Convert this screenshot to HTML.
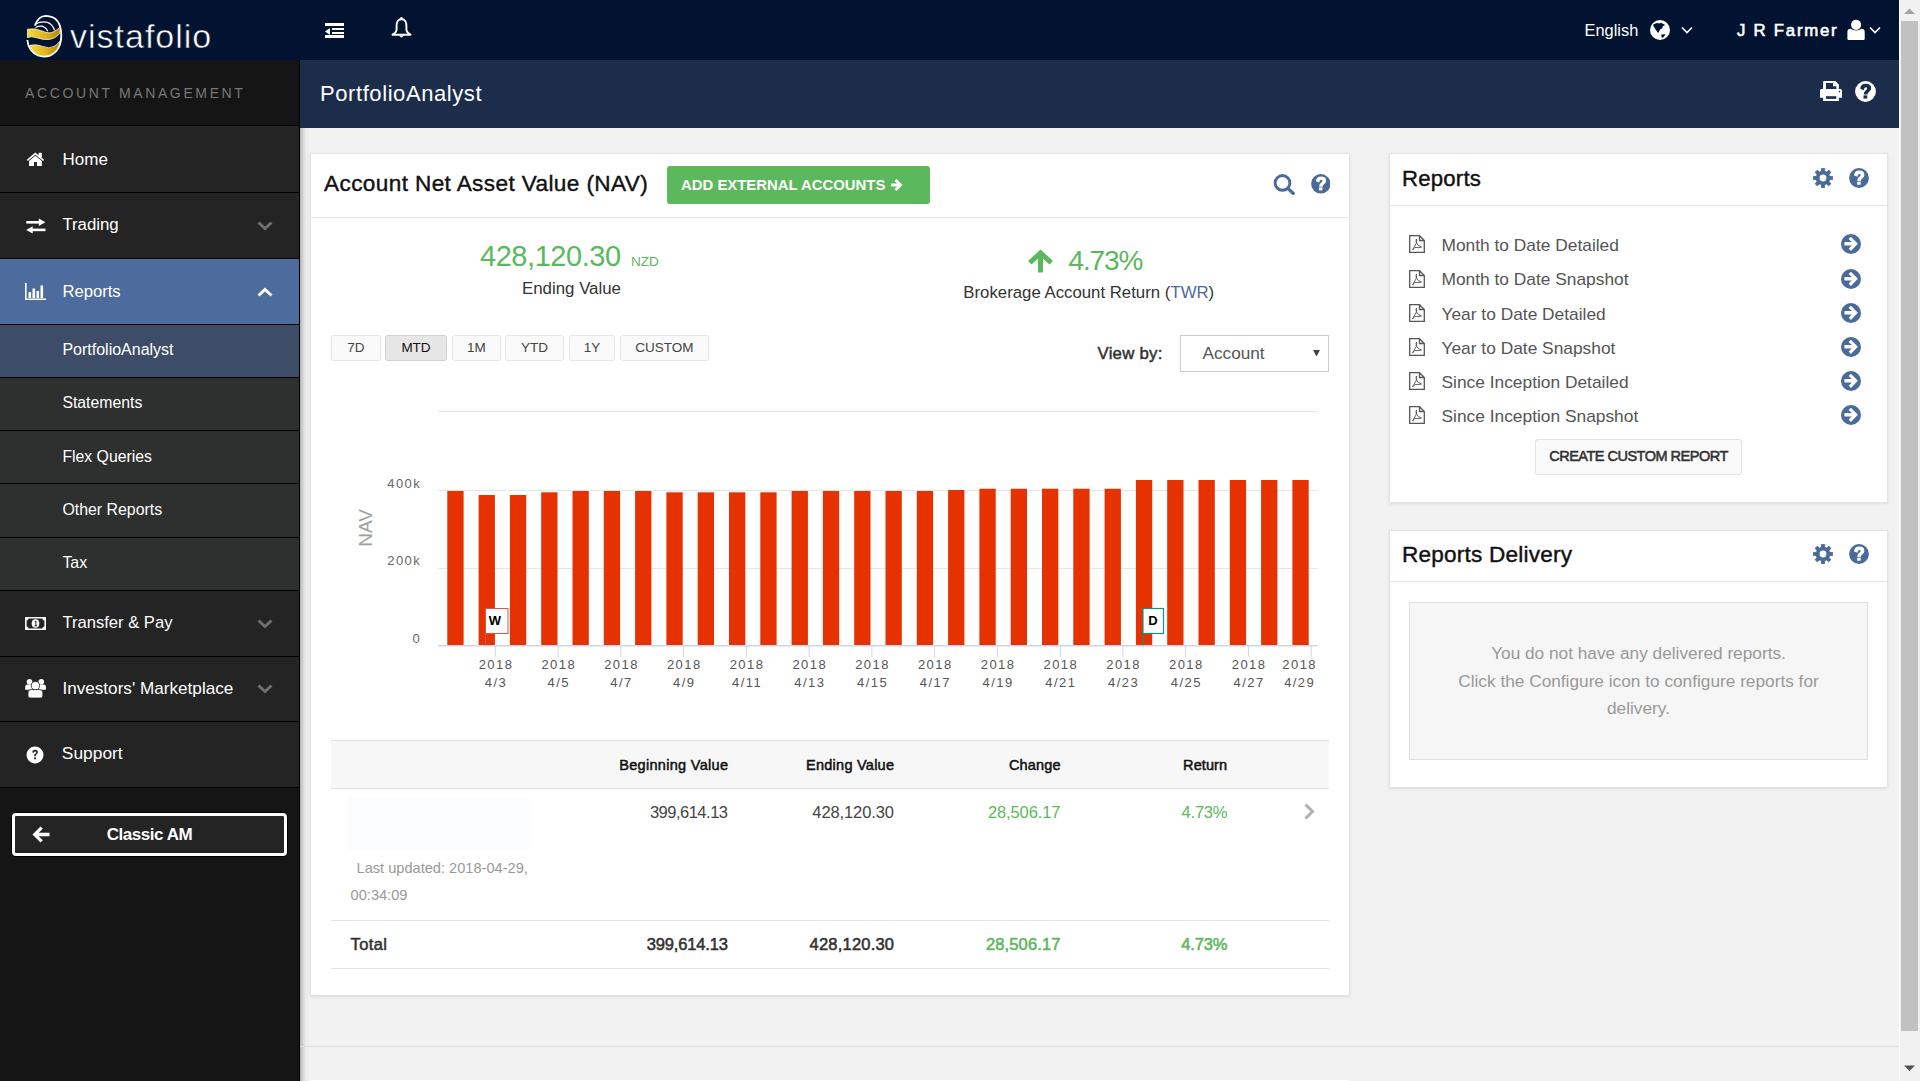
<!DOCTYPE html><html><head><meta charset="utf-8"><style>
html,body{margin:0;padding:0;width:1920px;height:1081px;overflow:hidden;font-family:"Liberation Sans",sans-serif;}
.t{position:absolute;line-height:1;white-space:nowrap;}
.r{position:absolute;display:block;}
</style></head><body>
<div class="r" style="left:0px;top:0px;width:1920px;height:1081px;background:#f2f2f2;"></div>
<div class="r" style="left:0px;top:0px;width:1899px;height:60px;background:#011330;"></div>
<div class="t" style="top:19.22px;font-size:34px;color:#fff;letter-spacing:1.0px;left:70px;-webkit-text-stroke:0.55px #011330;">vistafolio</div>
<svg class="r" style="left:22px;top:10px;" width="46" height="50" viewBox="22 10 46 50">
<defs><linearGradient id="gold" x1="0" x2="1"><stop offset="0" stop-color="#f3dc3a"/><stop offset="0.55" stop-color="#ddb21c"/><stop offset="1" stop-color="#b8820c"/></linearGradient></defs>
<path d="M35 25.8 Q38 16 46 15.9 Q61 16.5 61.3 35 Q61.5 50 50 55.6 Q44 57.5 38 55.5 Q28.5 51.5 27.3 40" fill="none" stroke="#fff" stroke-width="1.8"/>
<path d="M35.5 27.5 Q44 23.5 47.8 31.3" fill="none" stroke="#fff" stroke-width="1.2"/>
<path d="M34.6 24.2 Q50 17.5 54.6 30.3" fill="none" stroke="#fff" stroke-width="1.2"/>
<path d="M27.4 29.2 Q35 27.5 42 31 Q49 34 53 32 Q57.5 30 60.3 26.8 L59.8 33.5 Q55 39 49 39.6 Q43 40 37 37.8 Q31 36 27.4 37.6 Z" fill="url(#gold)" stroke="#fff" stroke-width="0.7"/>
<path d="M29.6 45.3 Q36 43.8 42 46.2 Q49 49 54 46.5 Q58 44 60.2 40.8 Q59 50.5 50.5 55 Q44 57.3 38 55 Q32 51.8 29.6 45.3 Z" fill="url(#gold)" stroke="#fff" stroke-width="0.7"/>
</svg>
<div class="r" style="left:325px;top:23px;width:19px;height:3px;background:#fff;"></div>
<div class="r" style="left:332px;top:28px;width:12px;height:2px;background:#fff;"></div>
<div class="r" style="left:332px;top:32px;width:12px;height:2px;background:#fff;"></div>
<div class="r" style="left:325px;top:35px;width:19px;height:3px;background:#fff;"></div>
<svg class="r" style="left:325px;top:28px;" width="6" height="7" viewBox="0 0 6 7"><path d="M0 3.5 L5 0 L5 7Z" fill="#fff"/></svg>
<svg class="r" style="left:391px;top:16px;" width="21" height="23" viewBox="0 0 21 23"><path d="M10.5 3.3 C6.8 3.3 5.6 6.2 5.6 9.5 L5.6 13.3 C5.6 15.6 4 17.3 1.5 18.7 L19.5 18.7 C17 17.3 15.4 15.6 15.4 13.3 L15.4 9.5 C15.4 6.2 14.2 3.3 10.5 3.3 Z" fill="none" stroke="#fff" stroke-width="1.9" stroke-linejoin="round"/><circle cx="10.5" cy="2.3" r="1.3" fill="#fff"/><path d="M8.2 19.8 Q10.5 23.2 12.8 19.8 Z" fill="#fff"/></svg>
<div class="t" style="top:22.12px;font-size:16.4px;color:#fff;left:1584.5px;">English</div>
<svg class="r" style="left:1650px;top:20px;" width="20" height="20" viewBox="0 0 20 20"><circle cx="10" cy="10" r="10" fill="#fff"/><path d="M3.6 4.2 L7 3 L9.5 3.6 L11 2.8 L15.2 5 L12.8 6.2 L12.3 8.2 L10 9.6 L8.8 12.6 L7.6 12.6 L5.6 9.6 L3.2 5.6 Z M11.3 14.6 L15.6 14.3 L13 17.8 L11.6 17.6 Z" fill="#011330"/></svg>
<svg class="r" style="left:1681px;top:26px;" width="12" height="8" viewBox="0 0 12 8"><path d="M1 1.5 L6 6.5 L11 1.5" fill="none" stroke="#fff" stroke-width="1.6"/></svg>
<div class="t" style="top:22.78px;font-size:16.8px;color:#fff;letter-spacing:1.75px;left:1737px;-webkit-text-stroke:0.6px #fff;">J R Farmer</div>
<svg class="r" style="left:1846px;top:19px;" width="20" height="22" viewBox="0 0 20 22"><circle cx="10.1" cy="5.8" r="5.1" fill="#fff"/><path d="M1.4 20 L1.4 13 Q1.4 9.7 4.6 9.7 Q7 11.5 10.1 11.5 Q13.2 11.5 15.5 9.7 Q18.7 9.7 18.7 13 L18.7 20 Q18.7 21.1 17.5 21.1 L2.6 21.1 Q1.4 21.1 1.4 20Z" fill="#fff"/></svg>
<svg class="r" style="left:1869px;top:26px;" width="12" height="8" viewBox="0 0 12 8"><path d="M1 1.5 L6 6.5 L11 1.5" fill="none" stroke="#fff" stroke-width="1.6"/></svg>
<div class="r" style="left:300px;top:60px;width:1599px;height:68px;background:#1c2d4c;"></div>
<div class="t" style="top:82.58px;font-size:22px;color:#fff;letter-spacing:0.58px;left:320px;">PortfolioAnalyst</div>
<div class="r" style="left:1899px;top:0px;width:21px;height:1081px;background:#f1f1f1;"></div>
<div class="r" style="left:1899px;top:0px;width:1px;height:1081px;background:#fff;"></div>
<div class="r" style="left:1901px;top:21px;width:17px;height:1010px;background:#c1c1c1;"></div>
<svg class="r" style="left:1904px;top:8px;" width="11" height="7" viewBox="0 0 11 7"><path d="M0 6 L5.5 0.5 L11 6Z" fill="#a3a3a3"/></svg>
<svg class="r" style="left:1904px;top:1065px;" width="11" height="7" viewBox="0 0 11 7"><path d="M0 0.5 L5.5 6 L11 0.5Z" fill="#505050"/></svg>
<div class="r" style="left:0px;top:60px;width:299px;height:1021px;background:#151515;"></div>
<div class="r" style="left:299px;top:60px;width:1px;height:1021px;background:#000;"></div>
<div class="r" style="left:300px;top:128px;width:10px;height:953px;background:;background:linear-gradient(to right,#b2b2b2 0px,#d6d6d6 3px,#ebebeb 6px,#f2f2f2 10px);"></div>
<div class="t" style="top:86.15px;font-size:14px;color:#777;letter-spacing:2.63px;left:25px;">ACCOUNT MANAGEMENT</div>
<div class="r" style="left:0px;top:125px;width:299px;height:1px;background:#000;"></div>
<div class="r" style="left:0px;top:126px;width:299px;height:66px;background:#242424;"></div>
<div class="r" style="left:0px;top:192px;width:299px;height:1px;background:#000;"></div>
<div class="r" style="left:0px;top:193px;width:299px;height:65px;background:#242424;"></div>
<div class="r" style="left:0px;top:258px;width:299px;height:1px;background:#000;"></div>
<div class="r" style="left:0px;top:259px;width:299px;height:65px;background:#4c6c9e;"></div>
<div class="r" style="left:0px;top:324px;width:299px;height:1px;background:#000;"></div>
<div class="r" style="left:0px;top:325px;width:299px;height:52px;background:#3e4d67;"></div>
<div class="r" style="left:0px;top:377px;width:299px;height:1px;background:#000;"></div>
<div class="r" style="left:0px;top:378px;width:299px;height:52px;background:#2e302f;"></div>
<div class="r" style="left:0px;top:430px;width:299px;height:1px;background:#000;"></div>
<div class="r" style="left:0px;top:431px;width:299px;height:52px;background:#2e302f;"></div>
<div class="r" style="left:0px;top:483px;width:299px;height:1px;background:#000;"></div>
<div class="r" style="left:0px;top:484px;width:299px;height:53px;background:#2e302f;"></div>
<div class="r" style="left:0px;top:537px;width:299px;height:1px;background:#000;"></div>
<div class="r" style="left:0px;top:538px;width:299px;height:52px;background:#2e302f;"></div>
<div class="r" style="left:0px;top:590px;width:299px;height:1px;background:#000;"></div>
<div class="r" style="left:0px;top:591px;width:299px;height:65px;background:#242424;"></div>
<div class="r" style="left:0px;top:656px;width:299px;height:1px;background:#000;"></div>
<div class="r" style="left:0px;top:657px;width:299px;height:64px;background:#242424;"></div>
<div class="r" style="left:0px;top:721px;width:299px;height:1px;background:#000;"></div>
<div class="r" style="left:0px;top:722px;width:299px;height:65px;background:#242424;"></div>
<div class="r" style="left:0px;top:787px;width:299px;height:1px;background:#000;"></div>
<div class="t" style="top:151.11px;font-size:17px;color:#fff;left:62.5px;">Home</div>
<div class="t" style="top:216.68px;font-size:16.8px;color:#fff;left:62.4px;">Trading</div>
<div class="t" style="top:283.51px;font-size:16.65px;color:#fff;left:62.4px;">Reports</div>
<div class="t" style="top:341.66px;font-size:16px;color:#fff;left:62.4px;">PortfolioAnalyst</div>
<div class="t" style="top:395.23px;font-size:15.8px;color:#fff;left:62.4px;">Statements</div>
<div class="t" style="top:448.63px;font-size:15.8px;color:#fff;left:62.4px;">Flex Queries</div>
<div class="t" style="top:501.84px;font-size:15.9px;color:#fff;left:62.4px;">Other Reports</div>
<div class="t" style="top:555.24px;font-size:15.9px;color:#fff;left:62.4px;">Tax</div>
<div class="t" style="top:615.15px;font-size:16.6px;color:#fff;left:62.4px;">Transfer &amp; Pay</div>
<div class="t" style="top:679.98px;font-size:17.15px;color:#fff;left:62.4px;">Investors' Marketplace</div>
<div class="t" style="top:745.27px;font-size:17.4px;color:#fff;left:61.8px;">Support</div>
<svg class="r" style="left:22px;top:148px;" width="28" height="24" viewBox="22 148 28 24"><path d="M27.3 160.3 L35.3 153.7 L43.6 160.3" fill="none" stroke="#fff" stroke-width="1.7"/><rect x="38.6" y="152.8" width="3.2" height="4.6" fill="#fff"/><path d="M29 160.9 L35.3 155.7 L41.9 160.9 L41.9 166 L36.9 166 L36.9 162 L34 162 L34 166 L29 166 Z" fill="#fff"/></svg>
<svg class="r" style="left:26px;top:218px;" width="20" height="16" viewBox="0 0 20 16"><rect x="0.3" y="3" width="14" height="2.6" fill="#fff"/><path d="M12.8 0.6 L19.3 4.3 L12.8 8Z" fill="#fff"/><rect x="5.5" y="10.6" width="14" height="2.6" fill="#fff"/><path d="M6.7 8.2 L0.2 11.9 L6.7 15.6Z" fill="#fff"/></svg>
<svg class="r" style="left:25px;top:283px;" width="21" height="17" viewBox="0 0 21 17"><path d="M0.8 0 L0.8 16.2 L21 16.2" fill="none" stroke="#fff" stroke-width="1.6"/><rect x="3.5" y="9" width="2.6" height="6" fill="#fff"/><rect x="7.5" y="5.5" width="2.6" height="9.5" fill="#fff"/><rect x="11.5" y="8" width="2.6" height="7" fill="#fff"/><rect x="15.5" y="2.5" width="2.6" height="12.5" fill="#fff"/></svg>
<svg class="r" style="left:25px;top:617px;" width="21" height="13" viewBox="0 0 21 13"><rect x="0" y="0" width="21" height="13" fill="#fff"/><path d="M3.6 1.6 L17.4 1.6 Q17.6 3.5 19.4 3.6 L19.4 9.4 Q17.6 9.5 17.4 11.4 L3.6 11.4 Q3.4 9.5 1.6 9.4 L1.6 3.6 Q3.4 3.5 3.6 1.6Z" fill="#242424"/><ellipse cx="10.5" cy="6.5" rx="3.8" ry="4.3" fill="#fff"/><path d="M9.6 4.8 L10.9 4 L10.9 8.8 M9.5 8.8 L12.2 8.8" fill="none" stroke="#242424" stroke-width="1"/></svg>
<svg class="r" style="left:20px;top:674px;" width="32" height="28" viewBox="20 674 32 28"><circle cx="29.5" cy="681.7" r="2.8" fill="#fff"/><circle cx="41.3" cy="681.7" r="2.8" fill="#fff"/><path d="M25.2 689.8 L25.2 686.8 Q25.2 684.6 27.4 684.6 L32 684.6 L32 689.8 Z" fill="#fff"/><path d="M45.9 689.8 L45.9 686.8 Q45.9 684.6 43.7 684.6 L39 684.6 L39 689.8 Z" fill="#fff"/><circle cx="35.45" cy="685.7" r="4.1" fill="#fff" stroke="#242424" stroke-width="0.8"/><path d="M28 696 L28 692.6 Q28 689.6 31 689.6 L39.8 689.6 Q42.8 689.6 42.8 692.6 L42.8 696 Q42.8 698 40.8 698 L30 698 Q28 698 28 696 Z" fill="#fff" stroke="#242424" stroke-width="0.8"/></svg>
<svg class="r" style="left:26px;top:746px;" width="18" height="18" viewBox="0 0 18 18"><circle cx="9" cy="9" r="8.5" fill="#fff"/><path d="M6.3 6.6 Q6.3 3.8 9.1 3.8 Q11.9 3.8 11.9 6.3 Q11.9 7.8 10.2 8.7 Q9.8 9 9.8 10.2 L8.1 10.2 Q8.1 8.3 9.3 7.6 Q10.2 7.1 10.2 6.4 Q10.2 5.4 9.1 5.4 Q8 5.4 7.9 6.8Z" fill="#242424"/><rect x="8.1" y="11.4" width="1.8" height="1.9" fill="#242424"/></svg>
<svg class="r" style="left:257px;top:221px;" width="16" height="10" viewBox="0 0 16 10"><path d="M1.5 1.5 L8 7.5 L14.5 1.5" fill="none" stroke="#6f6f6f" stroke-width="3"/></svg>
<svg class="r" style="left:257px;top:287px;" width="16" height="10" viewBox="0 0 16 10"><path d="M1.5 8.5 L8 2.5 L14.5 8.5" fill="none" stroke="#fff" stroke-width="3"/></svg>
<svg class="r" style="left:257px;top:619px;" width="16" height="10" viewBox="0 0 16 10"><path d="M1.5 1.5 L8 7.5 L14.5 1.5" fill="none" stroke="#6f6f6f" stroke-width="3"/></svg>
<svg class="r" style="left:257px;top:684px;" width="16" height="10" viewBox="0 0 16 10"><path d="M1.5 1.5 L8 7.5 L14.5 1.5" fill="none" stroke="#6f6f6f" stroke-width="3"/></svg>
<div class="r" style="left:12px;top:813px;width:275px;height:43px;background:#242424;box-sizing:border-box;border:3px solid #fff;border-radius:4px;box-shadow:0 0 0 1px #000;"></div>
<div class="t" style="top:826.21px;font-size:17px;color:#fff;font-weight:700;letter-spacing:-0.45px;left:-250.5px;width:800px;text-align:center;">Classic AM</div>
<svg class="r" style="left:32px;top:826px;" width="18" height="17" viewBox="0 0 18 17"><path d="M8.5 0.5 L0.5 8.5 L8.5 16.5 L10.8 14.2 L6.7 10.2 L17.5 10.2 L17.5 6.8 L6.7 6.8 L10.8 2.8Z" fill="#fff"/></svg>
<div class="r" style="left:300px;top:1046px;width:1599px;height:1px;background:#dedede;"></div>
<div class="r" style="left:310px;top:1080px;width:1039px;height:1px;background:#fff;"></div>
<div class="r" style="left:310px;top:153px;width:1040px;height:843px;background:#fff;box-sizing:border-box;border:1px solid #e3e3e3;box-shadow:0 1px 3px rgba(0,0,0,0.09);"></div>
<div class="t" style="top:173.17px;font-size:22.6px;color:#111;letter-spacing:0.38px;left:324px;-webkit-text-stroke:0.4px #111;">Account Net Asset Value (NAV)</div>
<div class="r" style="left:667px;top:166px;width:263px;height:38px;background:#5cb85c;border-radius:3px;"></div>
<div class="t" style="top:178.39px;font-size:14.9px;color:#fff;font-weight:700;left:681px;">ADD EXTERNAL ACCOUNTS</div>
<svg class="r" style="left:890px;top:178px;" width="14" height="14" viewBox="0 0 14 14"><path d="M6.5 1 L12.5 7 L6.5 13 L4.5 11 L7.2 8.5 L1 8.5 L1 5.5 L7.2 5.5 L4.5 3Z" fill="#fff"/></svg>
<svg class="r" style="left:1273px;top:173px;" width="22" height="22" viewBox="0 0 22 22"><circle cx="9.5" cy="9.9" r="7.4" fill="none" stroke="#4a6a9b" stroke-width="2.9"/><path d="M15 15.6 L20.3 20.5" stroke="#4a6a9b" stroke-width="3.2" stroke-linecap="round"/></svg>
<svg class="r" style="left:1310.5px;top:174px;" width="19.6" height="19.6" viewBox="0 0 20 20"><circle cx="10" cy="10" r="9.9" fill="#4a6a9b"/><path d="M5 7.4 Q5.3 2.6 10.3 2.6 Q15.4 2.6 15.4 6.9 Q15.4 9 13.3 10.4 Q11.9 11.3 11.9 12.9 L8.3 12.9 Q8.3 10.3 10 9.1 Q11.6 8 11.6 7.1 Q11.6 5.9 10.2 5.9 Q8.9 5.9 8.3 8.7Z" fill="#fff"/><rect x="8.1" y="13.7" width="3.6" height="3" fill="#fff"/></svg>
<svg class="r" style="left:1855px;top:81px;" width="21" height="21" viewBox="0 0 20 20"><circle cx="10" cy="10" r="9.9" fill="#fff"/><path d="M5 7.4 Q5.3 2.6 10.3 2.6 Q15.4 2.6 15.4 6.9 Q15.4 9 13.3 10.4 Q11.9 11.3 11.9 12.9 L8.3 12.9 Q8.3 10.3 10 9.1 Q11.6 8 11.6 7.1 Q11.6 5.9 10.2 5.9 Q8.9 5.9 8.3 8.7Z" fill="#1c2d4c"/><rect x="8.1" y="13.7" width="3.6" height="3" fill="#1c2d4c"/></svg>
<svg class="r" style="left:1818px;top:78px;" width="26" height="26" viewBox="1818 78 26 26"><path d="M1823.1 90 L1823.1 81.9 Q1823.1 80.9 1824.1 80.9 L1835.4 80.9 L1838.9 84.4 L1838.9 90 Z" fill="#fff"/><path d="M1826 83.1 L1833 83.1 L1833 86.2 L1836.3 86.2 L1836.3 90.8 L1826 90.8 Z" fill="#1c2d4c"/><path d="M1820 96.2 L1820 90.4 Q1820 88.9 1821.5 88.9 L1840.5 88.9 Q1842 88.9 1842 90.4 L1842 97.7 L1838.9 97.7 L1838.9 101 L1823.1 101 L1823.1 97.7 L1820 97.7 Z" fill="#fff"/><rect x="1826" y="96.2" width="10.3" height="2.7" fill="#1c2d4c"/><circle cx="1839.4" cy="91.6" r="0.8" fill="#1c2d4c"/></svg>
<div class="r" style="left:311px;top:217px;width:1038px;height:1px;background:#e6e6e6;"></div>
<div class="t" style="top:242.25px;font-size:29px;color:#5cb85c;letter-spacing:-0.45px;left:480px;">428,120.30</div>
<div class="t" style="top:255.29px;font-size:13.6px;color:#5cb85c;left:631px;">NZD</div>
<div class="t" style="top:281.34px;font-size:16.85px;color:#333;left:522px;">Ending Value</div>
<svg class="r" style="left:1027px;top:249px;" width="27" height="24" viewBox="0 0 27 24"><path d="M13.5 0.5 L26 12 L22.5 15.5 L16 9.8 L16 23.5 L11 23.5 L11 9.8 L4.5 15.5 L1 12Z" fill="#5cb85c"/></svg>
<div class="t" style="top:247.30px;font-size:28px;color:#5cb85c;letter-spacing:-1.15px;left:1068.5px;">4.73%</div>
<div class="t" style="top:284.78px;font-size:16.8px;color:#333;left:963.3px;">Brokerage Account Return (<span style="color:#4a6a9b">TWR</span>)</div>
<div class="r" style="left:331px;top:335px;width:50px;height:26px;background:#fafafa;box-sizing:border-box;border:1px solid #e6e6e6;border-radius:3px;"></div>
<div class="t" style="top:340.57px;font-size:13.5px;color:#444;left:-44.0px;width:800px;text-align:center;">7D</div>
<div class="r" style="left:385px;top:335px;width:62px;height:26px;background:#e6e6e6;box-sizing:border-box;border:1px solid #d2d2d2;border-radius:3px;"></div>
<div class="t" style="top:340.57px;font-size:13.5px;color:#111;left:16.0px;width:800px;text-align:center;">MTD</div>
<div class="r" style="left:452px;top:335px;width:49px;height:26px;background:#fafafa;box-sizing:border-box;border:1px solid #e6e6e6;border-radius:3px;"></div>
<div class="t" style="top:340.57px;font-size:13.5px;color:#444;left:76.5px;width:800px;text-align:center;">1M</div>
<div class="r" style="left:505px;top:335px;width:59px;height:26px;background:#fafafa;box-sizing:border-box;border:1px solid #e6e6e6;border-radius:3px;"></div>
<div class="t" style="top:340.57px;font-size:13.5px;color:#444;left:134.5px;width:800px;text-align:center;">YTD</div>
<div class="r" style="left:569px;top:335px;width:46px;height:26px;background:#fafafa;box-sizing:border-box;border:1px solid #e6e6e6;border-radius:3px;"></div>
<div class="t" style="top:340.57px;font-size:13.5px;color:#444;left:192.0px;width:800px;text-align:center;">1Y</div>
<div class="r" style="left:620px;top:335px;width:89px;height:26px;background:#fafafa;box-sizing:border-box;border:1px solid #e6e6e6;border-radius:3px;"></div>
<div class="t" style="top:340.57px;font-size:13.5px;color:#444;left:264.5px;width:800px;text-align:center;">CUSTOM</div>
<div class="t" style="top:345.78px;font-size:16.8px;color:#333;letter-spacing:0.25px;left:1097.5px;-webkit-text-stroke:0.5px #333;">View by:</div>
<div class="r" style="left:1180px;top:335px;width:149px;height:37px;background:#fff;box-sizing:border-box;border:1px solid #ccc;"></div>
<div class="t" style="top:345.44px;font-size:17.2px;color:#555;left:1202.5px;">Account</div>
<svg class="r" style="left:1312px;top:349px;" width="9" height="8" viewBox="0 0 9 8"><path d="M1 1 L8 1 L4.5 7.5Z" fill="#444"/></svg>
<div class="r" style="left:438px;top:411px;width:879px;height:1px;background:#e6e6e6;"></div>
<div class="r" style="left:438px;top:490px;width:879px;height:1px;background:#e6e6e6;"></div>
<div class="r" style="left:438px;top:568px;width:879px;height:1px;background:#e6e6e6;"></div>
<svg class="r" style="left:0px;top:0px;pointer-events:none;" width="1920" height="1081" viewBox="0 0 1920 1081"><rect x="447.30" y="491" width="16.3" height="154.00" fill="#e63100"/><rect x="478.60" y="495" width="16.3" height="150.00" fill="#e63100"/><rect x="509.90" y="495" width="16.3" height="150.00" fill="#e63100"/><rect x="541.20" y="492.3" width="16.3" height="152.70" fill="#e63100"/><rect x="572.50" y="491" width="16.3" height="154.00" fill="#e63100"/><rect x="603.80" y="491" width="16.3" height="154.00" fill="#e63100"/><rect x="635.10" y="491" width="16.3" height="154.00" fill="#e63100"/><rect x="666.40" y="492.3" width="16.3" height="152.70" fill="#e63100"/><rect x="697.70" y="492.3" width="16.3" height="152.70" fill="#e63100"/><rect x="729.00" y="492.3" width="16.3" height="152.70" fill="#e63100"/><rect x="760.30" y="492.3" width="16.3" height="152.70" fill="#e63100"/><rect x="791.60" y="491" width="16.3" height="154.00" fill="#e63100"/><rect x="822.90" y="491" width="16.3" height="154.00" fill="#e63100"/><rect x="854.20" y="491" width="16.3" height="154.00" fill="#e63100"/><rect x="885.50" y="491" width="16.3" height="154.00" fill="#e63100"/><rect x="916.80" y="491" width="16.3" height="154.00" fill="#e63100"/><rect x="948.10" y="490" width="16.3" height="155.00" fill="#e63100"/><rect x="979.40" y="488.75" width="16.3" height="156.25" fill="#e63100"/><rect x="1010.70" y="488.75" width="16.3" height="156.25" fill="#e63100"/><rect x="1042.00" y="488.75" width="16.3" height="156.25" fill="#e63100"/><rect x="1073.30" y="488.75" width="16.3" height="156.25" fill="#e63100"/><rect x="1104.60" y="488.75" width="16.3" height="156.25" fill="#e63100"/><rect x="1135.90" y="480" width="16.3" height="165.00" fill="#e63100"/><rect x="1167.20" y="480" width="16.3" height="165.00" fill="#e63100"/><rect x="1198.50" y="480" width="16.3" height="165.00" fill="#e63100"/><rect x="1229.80" y="480" width="16.3" height="165.00" fill="#e63100"/><rect x="1261.10" y="480" width="16.3" height="165.00" fill="#e63100"/><rect x="1292.40" y="480" width="16.3" height="165.00" fill="#e63100"/><rect x="438" y="645" width="879" height="1.5" fill="#ccd6eb"/><rect x="494.80" y="646" width="1" height="11" fill="#ccd6eb"/><rect x="557.56" y="646" width="1" height="11" fill="#ccd6eb"/><rect x="620.32" y="646" width="1" height="11" fill="#ccd6eb"/><rect x="683.08" y="646" width="1" height="11" fill="#ccd6eb"/><rect x="745.84" y="646" width="1" height="11" fill="#ccd6eb"/><rect x="808.60" y="646" width="1" height="11" fill="#ccd6eb"/><rect x="871.36" y="646" width="1" height="11" fill="#ccd6eb"/><rect x="934.12" y="646" width="1" height="11" fill="#ccd6eb"/><rect x="996.88" y="646" width="1" height="11" fill="#ccd6eb"/><rect x="1059.64" y="646" width="1" height="11" fill="#ccd6eb"/><rect x="1122.40" y="646" width="1" height="11" fill="#ccd6eb"/><rect x="1185.16" y="646" width="1" height="11" fill="#ccd6eb"/><rect x="1247.92" y="646" width="1" height="11" fill="#ccd6eb"/><rect x="1310.68" y="646" width="1" height="11" fill="#ccd6eb"/><path d="M485.5 645.5 L485.5 633.5" stroke="#e0524a" stroke-width="1"/><rect x="485.5" y="608.5" width="22.5" height="25" fill="#fff" stroke="#e0524a" stroke-width="1"/><path d="M1143 645.5 L1143 633.5" stroke="#1a9080" stroke-width="1.2"/><rect x="1143" y="608.5" width="20.5" height="25" fill="#fff" stroke="#1a9080" stroke-width="1.2"/></svg>
<div class="t" style="top:614.00px;font-size:13px;color:#000;font-weight:700;left:95px;width:800px;text-align:center;">W</div>
<div class="t" style="top:614.00px;font-size:13px;color:#000;font-weight:700;left:753px;width:800px;text-align:center;">D</div>
<div class="t" style="top:476.80px;font-size:13px;color:#666;letter-spacing:1.4px;right:1498.8999999999999px;text-align:right;">400k</div>
<div class="t" style="top:554.30px;font-size:13px;color:#666;letter-spacing:1.4px;right:1498.8999999999999px;text-align:right;">200k</div>
<div class="t" style="top:631.80px;font-size:13px;color:#666;right:1500.3px;text-align:right;">0</div>
<div class="t" style="left:365px;top:528px;font-size:19px;color:#a0a0a0;transform:translate(-50%,-50%) rotate(-90deg);">NAV</div>
<div class="t" style="top:657.60px;font-size:13px;color:#555;letter-spacing:1.45px;left:96.0px;width:800px;text-align:center;">2018</div>
<div class="t" style="top:675.90px;font-size:13px;color:#555;letter-spacing:1.45px;left:96.0px;width:800px;text-align:center;">4/3</div>
<div class="t" style="top:657.60px;font-size:13px;color:#555;letter-spacing:1.45px;left:158.7600000000001px;width:800px;text-align:center;">2018</div>
<div class="t" style="top:675.90px;font-size:13px;color:#555;letter-spacing:1.45px;left:158.7600000000001px;width:800px;text-align:center;">4/5</div>
<div class="t" style="top:657.60px;font-size:13px;color:#555;letter-spacing:1.45px;left:221.5200000000001px;width:800px;text-align:center;">2018</div>
<div class="t" style="top:675.90px;font-size:13px;color:#555;letter-spacing:1.45px;left:221.5200000000001px;width:800px;text-align:center;">4/7</div>
<div class="t" style="top:657.60px;font-size:13px;color:#555;letter-spacing:1.45px;left:284.2800000000001px;width:800px;text-align:center;">2018</div>
<div class="t" style="top:675.90px;font-size:13px;color:#555;letter-spacing:1.45px;left:284.2800000000001px;width:800px;text-align:center;">4/9</div>
<div class="t" style="top:657.60px;font-size:13px;color:#555;letter-spacing:1.45px;left:347.0400000000001px;width:800px;text-align:center;">2018</div>
<div class="t" style="top:675.90px;font-size:13px;color:#555;letter-spacing:1.45px;left:347.0400000000001px;width:800px;text-align:center;">4/11</div>
<div class="t" style="top:657.60px;font-size:13px;color:#555;letter-spacing:1.45px;left:409.80000000000007px;width:800px;text-align:center;">2018</div>
<div class="t" style="top:675.90px;font-size:13px;color:#555;letter-spacing:1.45px;left:409.80000000000007px;width:800px;text-align:center;">4/13</div>
<div class="t" style="top:657.60px;font-size:13px;color:#555;letter-spacing:1.45px;left:472.56000000000006px;width:800px;text-align:center;">2018</div>
<div class="t" style="top:675.90px;font-size:13px;color:#555;letter-spacing:1.45px;left:472.56000000000006px;width:800px;text-align:center;">4/15</div>
<div class="t" style="top:657.60px;font-size:13px;color:#555;letter-spacing:1.45px;left:535.32px;width:800px;text-align:center;">2018</div>
<div class="t" style="top:675.90px;font-size:13px;color:#555;letter-spacing:1.45px;left:535.32px;width:800px;text-align:center;">4/17</div>
<div class="t" style="top:657.60px;font-size:13px;color:#555;letter-spacing:1.45px;left:598.08px;width:800px;text-align:center;">2018</div>
<div class="t" style="top:675.90px;font-size:13px;color:#555;letter-spacing:1.45px;left:598.08px;width:800px;text-align:center;">4/19</div>
<div class="t" style="top:657.60px;font-size:13px;color:#555;letter-spacing:1.45px;left:660.8400000000001px;width:800px;text-align:center;">2018</div>
<div class="t" style="top:675.90px;font-size:13px;color:#555;letter-spacing:1.45px;left:660.8400000000001px;width:800px;text-align:center;">4/21</div>
<div class="t" style="top:657.60px;font-size:13px;color:#555;letter-spacing:1.45px;left:723.6000000000001px;width:800px;text-align:center;">2018</div>
<div class="t" style="top:675.90px;font-size:13px;color:#555;letter-spacing:1.45px;left:723.6000000000001px;width:800px;text-align:center;">4/23</div>
<div class="t" style="top:657.60px;font-size:13px;color:#555;letter-spacing:1.45px;left:786.3600000000001px;width:800px;text-align:center;">2018</div>
<div class="t" style="top:675.90px;font-size:13px;color:#555;letter-spacing:1.45px;left:786.3600000000001px;width:800px;text-align:center;">4/25</div>
<div class="t" style="top:657.60px;font-size:13px;color:#555;letter-spacing:1.45px;left:849.1200000000001px;width:800px;text-align:center;">2018</div>
<div class="t" style="top:675.90px;font-size:13px;color:#555;letter-spacing:1.45px;left:849.1200000000001px;width:800px;text-align:center;">4/27</div>
<div class="t" style="top:657.60px;font-size:13px;color:#555;letter-spacing:1.45px;left:899.7px;width:800px;text-align:center;">2018</div>
<div class="t" style="top:675.90px;font-size:13px;color:#555;letter-spacing:1.45px;left:899.7px;width:800px;text-align:center;">4/29</div>
<div class="r" style="left:331px;top:740px;width:998px;height:48px;background:#f7f7f7;"></div>
<div class="r" style="left:331px;top:740px;width:998px;height:1px;background:#e2e2e2;"></div>
<div class="r" style="left:331px;top:788px;width:998px;height:1px;background:#e2e2e2;"></div>
<div class="t" style="top:758.23px;font-size:14.5px;color:#111;letter-spacing:0.3px;right:1191.7px;text-align:right;-webkit-text-stroke:0.5px #111;">Beginning Value</div>
<div class="t" style="top:758.23px;font-size:14.5px;color:#111;letter-spacing:0.25px;right:1025.75px;text-align:right;-webkit-text-stroke:0.5px #111;">Ending Value</div>
<div class="t" style="top:758.23px;font-size:14.5px;color:#111;letter-spacing:0.15px;right:859.35px;text-align:right;-webkit-text-stroke:0.5px #111;">Change</div>
<div class="t" style="top:758.23px;font-size:14.5px;color:#111;letter-spacing:0.08px;right:692.92px;text-align:right;-webkit-text-stroke:0.5px #111;">Return</div>
<div class="r" style="left:347px;top:797px;width:182px;height:53px;background:#fbfcfe;"></div>
<div class="t" style="top:804.03px;font-size:16.5px;color:#444;letter-spacing:-0.5px;right:1192.5px;text-align:right;">399,614.13</div>
<div class="t" style="top:804.03px;font-size:16.5px;color:#444;letter-spacing:-0.1px;right:1026.1px;text-align:right;">428,120.30</div>
<div class="t" style="top:804.03px;font-size:16.5px;color:#5cb85c;letter-spacing:-0.1px;right:859.6px;text-align:right;">28,506.17</div>
<div class="t" style="top:804.03px;font-size:16.5px;color:#5cb85c;letter-spacing:-0.2px;right:692.7px;text-align:right;">4.73%</div>
<svg class="r" style="left:1303px;top:803px;" width="12" height="17" viewBox="0 0 12 17"><path d="M2.5 1.5 L9.5 8.5 L2.5 15.5" fill="none" stroke="#b0b0b0" stroke-width="3"/></svg>
<div class="t" style="top:860.64px;font-size:14.6px;color:#999;left:356.6px;">Last updated: 2018-04-29,</div>
<div class="t" style="top:887.74px;font-size:14.6px;color:#999;left:350.6px;">00:34:09</div>
<div class="r" style="left:331px;top:920px;width:998px;height:1px;background:#e2e2e2;"></div>
<div class="r" style="left:331px;top:968px;width:998px;height:1px;background:#e2e2e2;"></div>
<div class="t" style="top:936.23px;font-size:16.5px;color:#333;letter-spacing:0.35px;left:350.6px;-webkit-text-stroke:0.55px #333;">Total</div>
<div class="t" style="top:936.23px;font-size:16.5px;color:#333;letter-spacing:-0.15px;right:1192.15px;text-align:right;-webkit-text-stroke:0.55px #333;">399,614.13</div>
<div class="t" style="top:936.23px;font-size:16.5px;color:#333;letter-spacing:0.2px;right:1025.8px;text-align:right;-webkit-text-stroke:0.55px #333;">428,120.30</div>
<div class="t" style="top:936.23px;font-size:16.5px;color:#5cb85c;letter-spacing:0.15px;right:859.35px;text-align:right;-webkit-text-stroke:0.55px #5cb85c;">28,506.17</div>
<div class="t" style="top:936.23px;font-size:16.5px;color:#5cb85c;letter-spacing:-0.15px;right:692.65px;text-align:right;-webkit-text-stroke:0.55px #5cb85c;">4.73%</div>
<div class="r" style="left:1389px;top:153px;width:499px;height:350px;background:#fff;box-sizing:border-box;border:1px solid #e3e3e3;box-shadow:0 1px 3px rgba(0,0,0,0.09);"></div>
<div class="t" style="top:167.61px;font-size:22.2px;color:#111;letter-spacing:0.2px;left:1402px;-webkit-text-stroke:0.4px #111;">Reports</div>
<svg class="r" style="left:1812.8px;top:167.8px;" width="20" height="20" viewBox="0 0 20 20"><circle cx="10" cy="10" r="7.3" fill="#4a6a9b"/><rect x="8.1" y="0.1" width="3.8" height="5" transform="rotate(0 10 10)" fill="#4a6a9b"/><rect x="8.1" y="0.1" width="3.8" height="5" transform="rotate(45 10 10)" fill="#4a6a9b"/><rect x="8.1" y="0.1" width="3.8" height="5" transform="rotate(90 10 10)" fill="#4a6a9b"/><rect x="8.1" y="0.1" width="3.8" height="5" transform="rotate(135 10 10)" fill="#4a6a9b"/><rect x="8.1" y="0.1" width="3.8" height="5" transform="rotate(180 10 10)" fill="#4a6a9b"/><rect x="8.1" y="0.1" width="3.8" height="5" transform="rotate(225 10 10)" fill="#4a6a9b"/><rect x="8.1" y="0.1" width="3.8" height="5" transform="rotate(270 10 10)" fill="#4a6a9b"/><rect x="8.1" y="0.1" width="3.8" height="5" transform="rotate(315 10 10)" fill="#4a6a9b"/><circle cx="10" cy="10" r="3.4" fill="#fff"/></svg>
<svg class="r" style="left:1849px;top:168px;" width="20" height="20" viewBox="0 0 20 20"><circle cx="10" cy="10" r="9.9" fill="#4a6a9b"/><path d="M5 7.4 Q5.3 2.6 10.3 2.6 Q15.4 2.6 15.4 6.9 Q15.4 9 13.3 10.4 Q11.9 11.3 11.9 12.9 L8.3 12.9 Q8.3 10.3 10 9.1 Q11.6 8 11.6 7.1 Q11.6 5.9 10.2 5.9 Q8.9 5.9 8.3 8.7Z" fill="#fff"/><rect x="8.1" y="13.7" width="3.6" height="3" fill="#fff"/></svg>
<div class="r" style="left:1390px;top:205px;width:497px;height:1px;background:#e6e6e6;"></div>
<div class="t" style="top:237.11px;font-size:17.35px;color:#555;left:1441.5px;">Month to Date Detailed</div>
<svg class="r" style="left:1409px;top:235.3px;" width="16" height="18" viewBox="0 0 16 18"><path d="M0.7 0.7 L10.5 0.7 L15.3 5.5 L15.3 17.3 L0.7 17.3Z M10.5 0.7 L10.5 5.5 L15.3 5.5" fill="none" stroke="#555" stroke-width="1.3"/><path d="M3.5 15 Q5 12 7 9 Q8 6 7.5 4 Q6.5 4.5 7.5 8 Q9 11.5 12.5 12 Q11 13 6 12.5 Q4 14 3.5 15Z" fill="none" stroke="#555" stroke-width="0.9"/></svg>
<svg class="r" style="left:1841px;top:234.3px;" width="20" height="20" viewBox="0 0 20 20"><circle cx="10" cy="10" r="10" fill="#4a6a9b"/><path d="M9.9 2.8 L16.9 9.85 L9.9 16.9 L7.6 14.6 L10.8 11.6 L3.9 11.6 Q3.4 11.6 3.4 11 L3.4 8.6 Q3.4 8 3.9 8 L10.8 8 L7.6 5.1Z" fill="#fff"/></svg>
<div class="t" style="top:271.31px;font-size:17.35px;color:#555;left:1441.5px;">Month to Date Snapshot</div>
<svg class="r" style="left:1409px;top:269.5px;" width="16" height="18" viewBox="0 0 16 18"><path d="M0.7 0.7 L10.5 0.7 L15.3 5.5 L15.3 17.3 L0.7 17.3Z M10.5 0.7 L10.5 5.5 L15.3 5.5" fill="none" stroke="#555" stroke-width="1.3"/><path d="M3.5 15 Q5 12 7 9 Q8 6 7.5 4 Q6.5 4.5 7.5 8 Q9 11.5 12.5 12 Q11 13 6 12.5 Q4 14 3.5 15Z" fill="none" stroke="#555" stroke-width="0.9"/></svg>
<svg class="r" style="left:1841px;top:268.5px;" width="20" height="20" viewBox="0 0 20 20"><circle cx="10" cy="10" r="10" fill="#4a6a9b"/><path d="M9.9 2.8 L16.9 9.85 L9.9 16.9 L7.6 14.6 L10.8 11.6 L3.9 11.6 Q3.4 11.6 3.4 11 L3.4 8.6 Q3.4 8 3.9 8 L10.8 8 L7.6 5.1Z" fill="#fff"/></svg>
<div class="t" style="top:305.51px;font-size:17.35px;color:#555;left:1441.5px;">Year to Date Detailed</div>
<svg class="r" style="left:1409px;top:303.70000000000005px;" width="16" height="18" viewBox="0 0 16 18"><path d="M0.7 0.7 L10.5 0.7 L15.3 5.5 L15.3 17.3 L0.7 17.3Z M10.5 0.7 L10.5 5.5 L15.3 5.5" fill="none" stroke="#555" stroke-width="1.3"/><path d="M3.5 15 Q5 12 7 9 Q8 6 7.5 4 Q6.5 4.5 7.5 8 Q9 11.5 12.5 12 Q11 13 6 12.5 Q4 14 3.5 15Z" fill="none" stroke="#555" stroke-width="0.9"/></svg>
<svg class="r" style="left:1841px;top:302.70000000000005px;" width="20" height="20" viewBox="0 0 20 20"><circle cx="10" cy="10" r="10" fill="#4a6a9b"/><path d="M9.9 2.8 L16.9 9.85 L9.9 16.9 L7.6 14.6 L10.8 11.6 L3.9 11.6 Q3.4 11.6 3.4 11 L3.4 8.6 Q3.4 8 3.9 8 L10.8 8 L7.6 5.1Z" fill="#fff"/></svg>
<div class="t" style="top:339.71px;font-size:17.35px;color:#555;left:1441.5px;">Year to Date Snapshot</div>
<svg class="r" style="left:1409px;top:337.90000000000003px;" width="16" height="18" viewBox="0 0 16 18"><path d="M0.7 0.7 L10.5 0.7 L15.3 5.5 L15.3 17.3 L0.7 17.3Z M10.5 0.7 L10.5 5.5 L15.3 5.5" fill="none" stroke="#555" stroke-width="1.3"/><path d="M3.5 15 Q5 12 7 9 Q8 6 7.5 4 Q6.5 4.5 7.5 8 Q9 11.5 12.5 12 Q11 13 6 12.5 Q4 14 3.5 15Z" fill="none" stroke="#555" stroke-width="0.9"/></svg>
<svg class="r" style="left:1841px;top:336.90000000000003px;" width="20" height="20" viewBox="0 0 20 20"><circle cx="10" cy="10" r="10" fill="#4a6a9b"/><path d="M9.9 2.8 L16.9 9.85 L9.9 16.9 L7.6 14.6 L10.8 11.6 L3.9 11.6 Q3.4 11.6 3.4 11 L3.4 8.6 Q3.4 8 3.9 8 L10.8 8 L7.6 5.1Z" fill="#fff"/></svg>
<div class="t" style="top:373.91px;font-size:17.35px;color:#555;left:1441.5px;">Since Inception Detailed</div>
<svg class="r" style="left:1409px;top:372.1px;" width="16" height="18" viewBox="0 0 16 18"><path d="M0.7 0.7 L10.5 0.7 L15.3 5.5 L15.3 17.3 L0.7 17.3Z M10.5 0.7 L10.5 5.5 L15.3 5.5" fill="none" stroke="#555" stroke-width="1.3"/><path d="M3.5 15 Q5 12 7 9 Q8 6 7.5 4 Q6.5 4.5 7.5 8 Q9 11.5 12.5 12 Q11 13 6 12.5 Q4 14 3.5 15Z" fill="none" stroke="#555" stroke-width="0.9"/></svg>
<svg class="r" style="left:1841px;top:371.1px;" width="20" height="20" viewBox="0 0 20 20"><circle cx="10" cy="10" r="10" fill="#4a6a9b"/><path d="M9.9 2.8 L16.9 9.85 L9.9 16.9 L7.6 14.6 L10.8 11.6 L3.9 11.6 Q3.4 11.6 3.4 11 L3.4 8.6 Q3.4 8 3.9 8 L10.8 8 L7.6 5.1Z" fill="#fff"/></svg>
<div class="t" style="top:408.11px;font-size:17.35px;color:#555;left:1441.5px;">Since Inception Snapshot</div>
<svg class="r" style="left:1409px;top:406.3px;" width="16" height="18" viewBox="0 0 16 18"><path d="M0.7 0.7 L10.5 0.7 L15.3 5.5 L15.3 17.3 L0.7 17.3Z M10.5 0.7 L10.5 5.5 L15.3 5.5" fill="none" stroke="#555" stroke-width="1.3"/><path d="M3.5 15 Q5 12 7 9 Q8 6 7.5 4 Q6.5 4.5 7.5 8 Q9 11.5 12.5 12 Q11 13 6 12.5 Q4 14 3.5 15Z" fill="none" stroke="#555" stroke-width="0.9"/></svg>
<svg class="r" style="left:1841px;top:405.3px;" width="20" height="20" viewBox="0 0 20 20"><circle cx="10" cy="10" r="10" fill="#4a6a9b"/><path d="M9.9 2.8 L16.9 9.85 L9.9 16.9 L7.6 14.6 L10.8 11.6 L3.9 11.6 Q3.4 11.6 3.4 11 L3.4 8.6 Q3.4 8 3.9 8 L10.8 8 L7.6 5.1Z" fill="#fff"/></svg>
<div class="r" style="left:1535px;top:439px;width:207px;height:36px;background:#fafafa;box-sizing:border-box;border:1px solid #e3e3e3;border-radius:3px;"></div>
<div class="t" style="top:449.13px;font-size:14.5px;color:#333;letter-spacing:-0.5px;left:1238.5px;width:800px;text-align:center;-webkit-text-stroke:0.55px #333;">CREATE CUSTOM REPORT</div>
<div class="r" style="left:1389px;top:530px;width:499px;height:258px;background:#fff;box-sizing:border-box;border:1px solid #e3e3e3;box-shadow:0 1px 3px rgba(0,0,0,0.09);"></div>
<div class="t" style="top:543.87px;font-size:22.6px;color:#111;letter-spacing:0.2px;left:1402px;-webkit-text-stroke:0.4px #111;">Reports Delivery</div>
<svg class="r" style="left:1813px;top:544px;" width="20" height="20" viewBox="0 0 20 20"><circle cx="10" cy="10" r="7.3" fill="#4a6a9b"/><rect x="8.1" y="0.1" width="3.8" height="5" transform="rotate(0 10 10)" fill="#4a6a9b"/><rect x="8.1" y="0.1" width="3.8" height="5" transform="rotate(45 10 10)" fill="#4a6a9b"/><rect x="8.1" y="0.1" width="3.8" height="5" transform="rotate(90 10 10)" fill="#4a6a9b"/><rect x="8.1" y="0.1" width="3.8" height="5" transform="rotate(135 10 10)" fill="#4a6a9b"/><rect x="8.1" y="0.1" width="3.8" height="5" transform="rotate(180 10 10)" fill="#4a6a9b"/><rect x="8.1" y="0.1" width="3.8" height="5" transform="rotate(225 10 10)" fill="#4a6a9b"/><rect x="8.1" y="0.1" width="3.8" height="5" transform="rotate(270 10 10)" fill="#4a6a9b"/><rect x="8.1" y="0.1" width="3.8" height="5" transform="rotate(315 10 10)" fill="#4a6a9b"/><circle cx="10" cy="10" r="3.4" fill="#fff"/></svg>
<svg class="r" style="left:1849px;top:544px;" width="20" height="20" viewBox="0 0 20 20"><circle cx="10" cy="10" r="9.9" fill="#4a6a9b"/><path d="M5 7.4 Q5.3 2.6 10.3 2.6 Q15.4 2.6 15.4 6.9 Q15.4 9 13.3 10.4 Q11.9 11.3 11.9 12.9 L8.3 12.9 Q8.3 10.3 10 9.1 Q11.6 8 11.6 7.1 Q11.6 5.9 10.2 5.9 Q8.9 5.9 8.3 8.7Z" fill="#fff"/><rect x="8.1" y="13.7" width="3.6" height="3" fill="#fff"/></svg>
<div class="r" style="left:1390px;top:581px;width:497px;height:1px;background:#e6e6e6;"></div>
<div class="r" style="left:1409px;top:602px;width:459px;height:158px;background:#f6f6f6;box-sizing:border-box;border:1px solid #e0e0e0;"></div>
<div class="t" style="top:645.40px;font-size:17.25px;color:#999;left:1238.5px;width:800px;text-align:center;">You do not have any delivered reports.</div>
<div class="t" style="top:672.60px;font-size:17.25px;color:#999;left:1238.5px;width:800px;text-align:center;">Click the Configure icon to configure reports for</div>
<div class="t" style="top:699.60px;font-size:17.25px;color:#999;left:1238.5px;width:800px;text-align:center;">delivery.</div>
</body></html>
